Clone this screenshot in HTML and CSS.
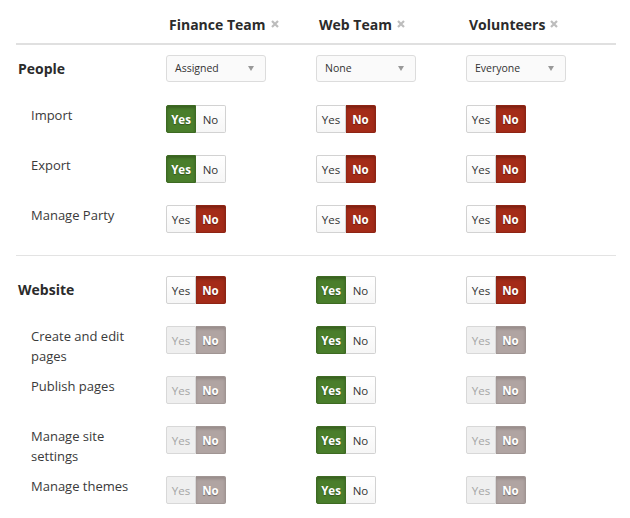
FILE: index.html
```html
<!DOCTYPE html>
<html>
<head>
<meta charset="utf-8">
<link rel="stylesheet" href="styles.css">
</head>
<body>
<div class="perm">
  <div class="row head">
    <div></div>
    <div class="col-head">Finance Team <svg class="x" viewBox="0 0 8 8"><path d="M1 1L7 7M7 1L1 7"/></svg></div>
    <div class="col-head">Web Team <svg class="x" viewBox="0 0 8 8"><path d="M1 1L7 7M7 1L1 7"/></svg></div>
    <div class="col-head">Volunteers <svg class="x" viewBox="0 0 8 8"><path d="M1 1L7 7M7 1L1 7"/></svg></div>
  </div>

  <div class="section">
    <div class="row">
      <div class="sec-label drop-label">People</div>
      <div><div class="select">Assigned<span class="caret"></span></div></div>
      <div><div class="select">None<span class="caret"></span></div></div>
      <div><div class="select">Everyone<span class="caret"></span></div></div>
    </div>
    <div class="row">
      <div class="label">Import</div>
      <div class="toggle"><span class="btn yes on">Yes</span><span class="btn no">No</span></div>
      <div class="toggle"><span class="btn yes">Yes</span><span class="btn no on">No</span></div>
      <div class="toggle"><span class="btn yes">Yes</span><span class="btn no on">No</span></div>
    </div>
    <div class="row">
      <div class="label">Export</div>
      <div class="toggle"><span class="btn yes on">Yes</span><span class="btn no">No</span></div>
      <div class="toggle"><span class="btn yes">Yes</span><span class="btn no on">No</span></div>
      <div class="toggle"><span class="btn yes">Yes</span><span class="btn no on">No</span></div>
    </div>
    <div class="row">
      <div class="label">Manage Party</div>
      <div class="toggle"><span class="btn yes">Yes</span><span class="btn no on">No</span></div>
      <div class="toggle"><span class="btn yes">Yes</span><span class="btn no on">No</span></div>
      <div class="toggle"><span class="btn yes">Yes</span><span class="btn no on">No</span></div>
    </div>
  </div>

  <div class="section">
    <div class="row">
      <div class="sec-label">Website</div>
      <div class="toggle"><span class="btn yes">Yes</span><span class="btn no on">No</span></div>
      <div class="toggle"><span class="btn yes on">Yes</span><span class="btn no">No</span></div>
      <div class="toggle"><span class="btn yes">Yes</span><span class="btn no on">No</span></div>
    </div>
    <div class="row">
      <div class="label">Create and edit pages</div>
      <div class="toggle disabled"><span class="btn yes">Yes</span><span class="btn no on">No</span></div>
      <div class="toggle"><span class="btn yes on">Yes</span><span class="btn no">No</span></div>
      <div class="toggle disabled"><span class="btn yes">Yes</span><span class="btn no on">No</span></div>
    </div>
    <div class="row">
      <div class="label">Publish pages</div>
      <div class="toggle disabled"><span class="btn yes">Yes</span><span class="btn no on">No</span></div>
      <div class="toggle"><span class="btn yes on">Yes</span><span class="btn no">No</span></div>
      <div class="toggle disabled"><span class="btn yes">Yes</span><span class="btn no on">No</span></div>
    </div>
    <div class="row">
      <div class="label">Manage site settings</div>
      <div class="toggle disabled"><span class="btn yes">Yes</span><span class="btn no on">No</span></div>
      <div class="toggle"><span class="btn yes on">Yes</span><span class="btn no">No</span></div>
      <div class="toggle disabled"><span class="btn yes">Yes</span><span class="btn no on">No</span></div>
    </div>
    <div class="row">
      <div class="label">Manage themes</div>
      <div class="toggle disabled"><span class="btn yes">Yes</span><span class="btn no on">No</span></div>
      <div class="toggle"><span class="btn yes on">Yes</span><span class="btn no">No</span></div>
      <div class="toggle disabled"><span class="btn yes">Yes</span><span class="btn no on">No</span></div>
    </div>
  </div>
</div>
</body>
</html>
```
FILE: styles.css
```css
html, body {
  margin: 0;
  padding: 0;
  background: #fff;
}
body {
  font-family: "Open Sans", "DejaVu Sans", sans-serif;
  color: #333;
}
.perm {
  margin-left: 16px;
  width: 600px;
}
.row {
  display: grid;
  grid-template-columns: 150px 150px 150px 150px;
  align-items: start;
  height: 50px;
  box-sizing: border-box;
  padding-top: 10px;
}
.row.head {
  height: 45px;
  padding-top: 15px;
  border-bottom: 2px solid #e0e0e0;
}
.col-head {
  padding-left: 3px;
  font-size: 14px;
  font-weight: 700;
  line-height: 20px;
  color: #2b2b2b;
  display: flex;
  align-items: center;
  gap: 5px;
}
.x {
  width: 8px;
  height: 8px;
  margin-top: -3px;
  stroke: #bdbdbd;
  stroke-width: 2.2;
  fill: none;
}
.section:not(:last-child) {
  padding-bottom: 10px;
  border-bottom: 1px solid #e3e3e3;
}
.section + .section {
  padding-top: 10px;
}
.sec-label {
  padding-left: 2px;
  font-size: 14px;
  font-weight: 700;
  line-height: 28px;
  color: #2b2b2b;
}
.sec-label.drop-label {
  line-height: 27px;
}
.label {
  padding: 0 20px 0 15px;
  font-size: 13px;
  line-height: 20px;
  color: #3a3a3a;
}
.select {
  position: relative;
  width: 100px;
  height: 27px;
  box-sizing: border-box;
  border: 1px solid #dcdcdc;
  border-radius: 3px;
  background: #fafafa;
  font-size: 10.5px;
  line-height: 25px;
  padding-left: 8px;
  color: #333;
}
.caret {
  position: absolute;
  right: 11px;
  top: 10px;
  width: 0;
  height: 0;
  border-left: 3.5px solid transparent;
  border-right: 3.5px solid transparent;
  border-top: 5px solid #999;
}
.toggle {
  display: flex;
  height: 28px;
}
.btn {
  width: 30px;
  height: 28px;
  box-sizing: border-box;
  border: 1px solid #d2d2d2;
  background: linear-gradient(#fff, #f6f6f6);
  font-size: 11.5px;
  line-height: 27px;
  text-align: center;
  color: #333;
}
.btn.yes {
  border-radius: 2px 0 0 2px;
}
.btn.no {
  border-left: none;
  border-radius: 0 2px 2px 0;
}
.btn.yes.on {
  background: #4a7e2b;
  border-color: #3d6a22;
  color: #fff;
  font-weight: 700;
  text-shadow: 0 1px 1px rgba(0, 0, 0, 0.35);
  box-shadow: inset 0 2px 3px rgba(0, 0, 0, 0.25);
}
.btn.no.on {
  background: #a42b18;
  border-color: #8e2414;
  color: #fff;
  font-weight: 700;
  text-shadow: 0 1px 1px rgba(0, 0, 0, 0.35);
  box-shadow: inset 0 2px 3px rgba(0, 0, 0, 0.25);
}
.disabled .btn {
  background: #efefef;
  border-color: #d8d8d8;
  color: #a5a5a5;
}
.disabled .btn.no.on {
  background: #b0a4a2;
  border-color: #a09593;
  color: #fff;
  box-shadow: inset 0 2px 3px rgba(0, 0, 0, 0.15);
}
```
